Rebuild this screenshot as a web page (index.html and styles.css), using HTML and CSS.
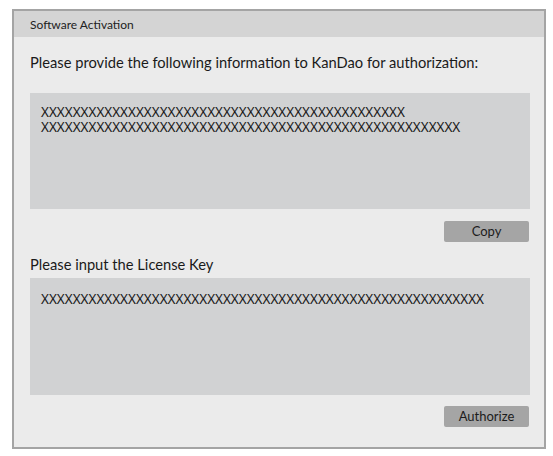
FILE: index.html
```html
<!DOCTYPE html>
<html>
<head>
<meta charset="utf-8">
<link rel="stylesheet" href="styles.css">
</head>
<body>
<div class="dialog">
  <div class="titlebar">Software Activation</div>
  <div class="content">
    <div class="label label-first">Please provide the following information to KanDao for authorization:</div>
    <div class="field field-info"><div class="line">XXXXXXXXXXXXXXXXXXXXXXXXXXXXXXXXXXXXXXXXXXXXXX</div><div class="line">XXXXXXXXXXXXXXXXXXXXXXXXXXXXXXXXXXXXXXXXXXXXXXXXXXXXX</div></div>
    <div class="actions"><button class="btn">Copy</button></div>
    <div class="label label-second">Please input the License Key</div>
    <div class="field field-key"><div class="line">XXXXXXXXXXXXXXXXXXXXXXXXXXXXXXXXXXXXXXXXXXXXXXXXXXXXXXXX</div></div>
    <div class="actions actions-last"><button class="btn">Authorize</button></div>
  </div>
</div>
</body>
</html>
```
FILE: styles.css
```css
html, body {
  margin: 0;
  padding: 0;
  background: #ffffff;
}
body {
  font-family: "Lato", "Noto Sans", sans-serif;
  color: #1c1c1c;
}
.dialog {
  margin: 9px 0 0 12px;
  width: 534px;
  height: 440px;
  box-sizing: border-box;
  border: 2px solid #a4a4a4;
  background: #ebebeb;
  display: flex;
  flex-direction: column;
}
.titlebar {
  height: 26px;
  box-sizing: border-box;
  padding: 2px 0 0 16px;
  background: #d4d4d4;
  font-size: 12px;
  line-height: 24px;
  color: #222;
}
.content {
  padding: 0 14px 0 16px;
  display: flex;
  flex-direction: column;
}
.label {
  font-size: 14.7px;
  line-height: 20px;
  color: #1a1a1a;
}
.label-first {
  margin-top: 15px;
}
.label-second {
  margin-top: 12px;
}
.field {
  background: #d1d2d3;
  box-sizing: border-box;
  padding: 12px 11px 0;
  font-family: "Noto Sans", sans-serif;
  font-size: 13.5px;
  color: #1a1a1a;
  white-space: nowrap;
  overflow: hidden;
}
.line {
  height: 15px;
  line-height: 15px;
}
.field-info {
  margin-top: 21px;
  height: 116px;
}
.field-key {
  margin-top: 4px;
  height: 117px;
  padding-top: 14px;
}
.actions {
  display: flex;
  justify-content: flex-end;
  margin-top: 12px;
  padding-right: 1px;
}
.actions-last {
  margin-top: 11px;
}
.btn {
  width: 85px;
  height: 21px;
  border: none;
  background: #a5a5a5;
  border-radius: 2px;
  font-family: "Lato", "Noto Sans", sans-serif;
  font-size: 13px;
  line-height: 21px;
  color: #1c1c1c;
  padding: 0;
}
```
